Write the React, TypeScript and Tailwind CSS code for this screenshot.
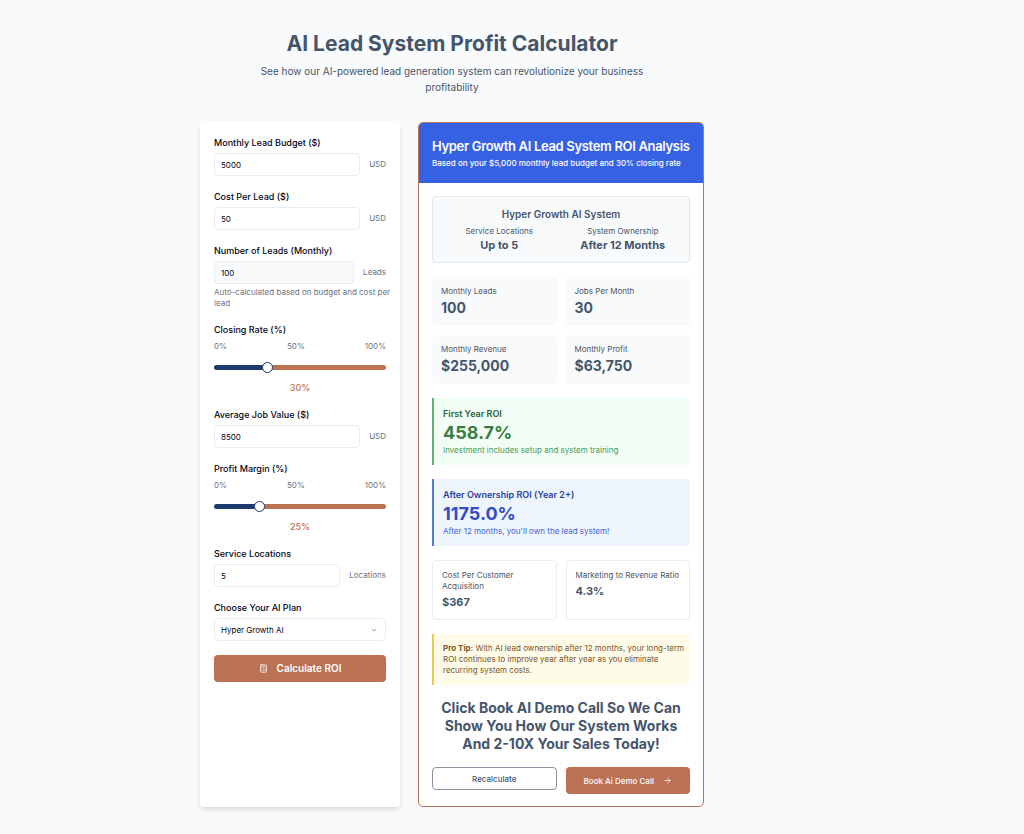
import { useState } from 'react'
import type { ReactNode } from 'react'
import { ArrowRight, Calculator, ChevronDown } from 'lucide-react'

interface NumberFieldProps {
  id: string
  label: string
  unit: string
  value: number
  onChange?: (value: number) => void
  readOnly?: boolean
  children?: ReactNode
}

const NumberField = ({ id, label, unit, value, onChange, readOnly, children }: NumberFieldProps) => (
  <div>
    <label htmlFor={id} className="mb-1 block text-[9px] leading-[13px] font-medium text-slate-950">
      {label}
    </label>
    <div className="flex items-center gap-[9px]">
      <input
        id={id}
        type="text"
        inputMode="numeric"
        value={value}
        readOnly={readOnly}
        onChange={(e) => onChange?.(Number(e.target.value) || 0)}
        className="h-[23px] min-w-0 flex-1 rounded-[4px] border border-[#e9edf2] bg-white px-[6px] text-[8px] text-slate-950 read-only:bg-slate-50"
      />
      <span className="text-[8px] leading-[11px] text-gray-500">{unit}</span>
    </div>
    {children}
  </div>
)

interface SliderFieldProps {
  id: string
  label: string
  value: number
  onChange: (value: number) => void
}

const SliderField = ({ id, label, value, onChange }: SliderFieldProps) => (
  <div>
    <label htmlFor={id} className="mb-1 block text-[9px] leading-[13px] font-medium text-slate-950">
      {label}
    </label>
    <div className="flex justify-between text-[8px] leading-[12px] text-gray-500">
      <span>0%</span>
      <span>50%</span>
      <span>100%</span>
    </div>
    <input
      id={id}
      type="range"
      min={0}
      max={100}
      value={value}
      onChange={(e) => onChange(Number(e.target.value))}
      style={{ backgroundImage: `linear-gradient(to right, #1e3a6e ${value}%, #bd7352 ${value}%)` }}
      className="mt-[13px] mb-[11px] block h-[5px] w-full appearance-none rounded-full [&::-webkit-slider-thumb]:h-[11px] [&::-webkit-slider-thumb]:w-[11px] [&::-webkit-slider-thumb]:appearance-none [&::-webkit-slider-thumb]:rounded-full [&::-webkit-slider-thumb]:border [&::-webkit-slider-thumb]:border-[#1e3a6e] [&::-webkit-slider-thumb]:bg-white"
    />
    <p className="text-center text-[9px] leading-[13px] font-medium text-[#bd7352]">{value}%</p>
  </div>
)

const StatTile = ({ label, value }: { label: string; value: string }) => (
  <div className="rounded-[4px] bg-slate-50 p-[9px]">
    <p className="text-[8px] leading-[11px] text-gray-600">{label}</p>
    <p className="mt-[2px] text-[14px] leading-[18px] font-bold text-slate-600">{value}</p>
  </div>
)

const OutlineTile = ({ label, value }: { label: string; value: string }) => (
  <div className="rounded-[4px] border border-[#e9edf2] py-[9px] pr-1 pl-[9px]">
    <p className="text-[8px] leading-[11px] text-gray-600">{label}</p>
    <p className="mt-[2px] text-[11px] leading-[16px] font-bold text-slate-600">{value}</p>
  </div>
)

const money = (n: number) => '$' + Math.round(n).toLocaleString('en-US')

export default function App() {
  const [budget, setBudget] = useState(5000)
  const [costPerLead, setCostPerLead] = useState(50)
  const [closingRate, setClosingRate] = useState(30)
  const [jobValue, setJobValue] = useState(8500)
  const [margin, setMargin] = useState(25)
  const [locations, setLocations] = useState(5)

  const leads = costPerLead > 0 ? Math.round(budget / costPerLead) : 0
  const jobs = Math.round((leads * closingRate) / 100)
  const revenue = jobs * jobValue
  const profit = (revenue * margin) / 100

  return (
    <main className="min-h-screen bg-slate-50 pt-[30px] pr-[120px] pb-[26px] font-['Inter',sans-serif]">
      <div className="mx-auto max-w-[504px]">
        <header className="mb-[27px] text-center">
          <h1 className="text-[21px] leading-[28px] font-bold text-slate-600">AI Lead System Profit Calculator</h1>
          <p className="mx-auto mt-[5px] max-w-[400px] text-[10px] leading-[16px] text-gray-600">
            See how our AI-powered lead generation system can revolutionize your business profitability
          </p>
        </header>

        <div className="grid grid-cols-[200px_1fr] gap-[18px]">
          <form
            onSubmit={(e) => e.preventDefault()}
            className="flex flex-col gap-[14px] rounded-[4px] bg-white p-[14px] shadow-md"
          >
            <NumberField id="budget" label="Monthly Lead Budget ($)" unit="USD" value={budget} onChange={setBudget} />
            <NumberField id="cpl" label="Cost Per Lead ($)" unit="USD" value={costPerLead} onChange={setCostPerLead} />
            <NumberField id="leads" label="Number of Leads (Monthly)" unit="Leads" value={leads} readOnly>
              <p className="mt-[3px] text-[8px] leading-[11px] whitespace-nowrap text-gray-500">
                Auto-calculated based on budget and cost per
                <br />
                lead
              </p>
            </NumberField>
            <SliderField id="closing" label="Closing Rate (%)" value={closingRate} onChange={setClosingRate} />
            <NumberField id="job" label="Average Job Value ($)" unit="USD" value={jobValue} onChange={setJobValue} />
            <SliderField id="margin" label="Profit Margin (%)" value={margin} onChange={setMargin} />
            <NumberField id="locations" label="Service Locations" unit="Locations" value={locations} onChange={setLocations} />
            <div>
              <label htmlFor="plan" className="mb-1 block text-[9px] leading-[13px] font-medium text-slate-950">
                Choose Your AI Plan
              </label>
              <div className="relative">
                <select
                  id="plan"
                  className="block h-[23px] w-full appearance-none rounded-[4px] border border-[#e9edf2] bg-white px-[6px] text-[8px] text-slate-950"
                >
                  <option>Hyper Growth AI</option>
                </select>
                <ChevronDown className="pointer-events-none absolute top-2 right-2 size-2 text-slate-500" />
              </div>
            </div>
            <button
              type="submit"
              className="flex h-[27px] items-center justify-center gap-[9px] rounded-[4px] bg-[#bb7153] text-[10px] font-semibold text-white"
            >
              <Calculator className="size-[9px]" />
              Calculate ROI
            </button>
          </form>

          <section className="overflow-hidden rounded-[5px] border border-[#bb7153] bg-white">
            <div className="bg-[#3761e3] px-[13px] pt-[14px] pb-[14px] text-white">
              <h2 className="text-[13px] leading-[18px] font-semibold tracking-tight">
                Hyper Growth AI Lead System ROI Analysis
              </h2>
              <p className="mt-[3px] text-[8px] leading-[11px] font-medium">
                Based on your {money(budget)} monthly lead budget and {closingRate}% closing rate
              </p>
            </div>

            <div className="flex flex-col gap-[14px] px-[13px] pt-[13px] pb-[12px]">
              <div className="rounded-[4px] border border-[#e2e8f0] bg-slate-50 px-[9px] pt-[10px] pb-[9px] text-center">
                <h3 className="text-[10px] leading-[14px] font-semibold text-slate-600">Hyper Growth AI System</h3>
                <div className="mt-[5px] grid grid-cols-2 gap-[9px]">
                  <div>
                    <p className="text-[8px] leading-[11px] text-gray-600">Service Locations</p>
                    <p className="text-[11px] leading-[16px] font-bold text-slate-600">Up to {locations}</p>
                  </div>
                  <div>
                    <p className="text-[8px] leading-[11px] text-gray-600">System Ownership</p>
                    <p className="text-[11px] leading-[16px] font-bold text-slate-600">After 12 Months</p>
                  </div>
                </div>
              </div>

              <div className="grid grid-cols-2 gap-[9px]">
                <StatTile label="Monthly Leads" value={String(leads)} />
                <StatTile label="Jobs Per Month" value={String(jobs)} />
                <StatTile label="Monthly Revenue" value={money(revenue)} />
                <StatTile label="Monthly Profit" value={money(profit)} />
              </div>

              <div className="rounded-r-[4px] border-l-2 border-[#5fb56d] bg-[#f1fdf5] p-[9px]">
                <h3 className="text-[9px] leading-[14px] font-semibold text-[#2b6238]">First Year ROI</h3>
                <p className="my-[2px] text-[18px] leading-[20px] font-bold text-[#3b7d45]">458.7%</p>
                <p className="text-[8px] leading-[11px] text-[#4a9959]">Investment includes setup and system training</p>
              </div>

              <div className="rounded-r-[4px] border-l-2 border-[#4f7edb] bg-[#eef5fd] p-[9px]">
                <h3 className="text-[9px] leading-[14px] font-semibold text-[#2c419e]">After Ownership ROI (Year 2+)</h3>
                <p className="my-[2px] text-[18px] leading-[20px] font-bold text-[#344cc4]">1175.0%</p>
                <p className="text-[8px] leading-[11px] text-[#4463d6]">After 12 months, you'll own the lead system!</p>
              </div>

              <div className="grid grid-cols-2 gap-[9px]">
                <OutlineTile label="Cost Per Customer Acquisition" value="$367" />
                <OutlineTile label="Marketing to Revenue Ratio" value="4.3%" />
              </div>

              <p className="rounded-r-[4px] border-l-2 border-[#e7ca4e] bg-[#fefce9] py-[9px] pr-[2px] pl-[9px] text-[8px] leading-[11px] text-[#7a5426]">
                <strong className="font-bold">Pro Tip:</strong> With AI lead ownership after 12 months, your long-term
                <br />
                ROI continues to improve year after year as you eliminate
                <br />
                recurring system costs.
              </p>

              <h2 className="text-center text-[14px] leading-[18px] font-bold text-slate-600">
                Click Book AI Demo Call So We Can Show You How Our System Works And 2-10X Your Sales Today!
              </h2>

              <div className="grid grid-cols-2 items-start gap-[9px]">
                <button
                  type="button"
                  className="h-[23px] rounded-[4px] border border-[#8a929f] bg-white text-[8px] font-medium text-slate-600"
                >
                  Recalculate
                </button>
                <button
                  type="button"
                  className="flex h-[27px] items-center justify-center gap-[9px] rounded-[4px] bg-[#bb7153] text-[8px] font-medium text-white"
                >
                  Book Ai Demo Call
                  <ArrowRight className="size-[9px]" />
                </button>
              </div>
            </div>
          </section>
        </div>
      </div>
    </main>
  )
}
